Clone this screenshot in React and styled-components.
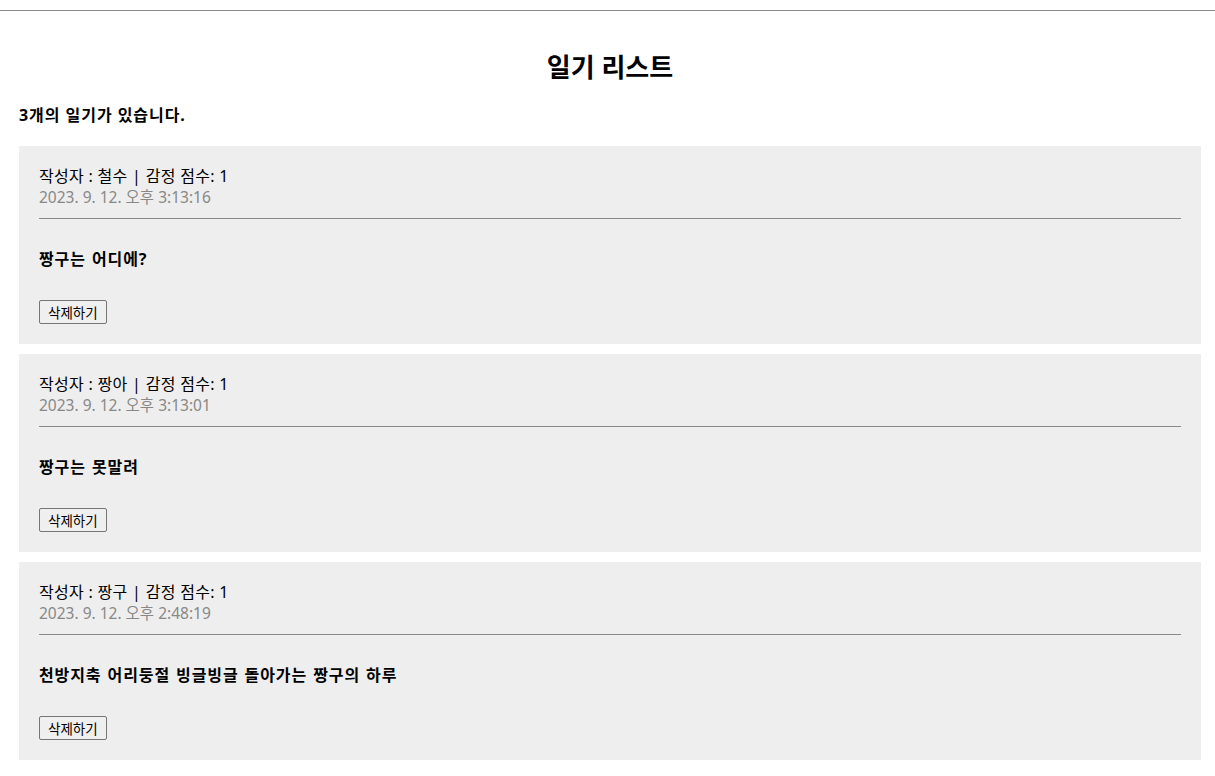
import styled, { createGlobalStyle } from "styled-components";

const GlobalStyle = createGlobalStyle`
  html, body {
    margin: 0;
    padding: 0;
    background: #ffffff;
  }
  body {
    font-family: "Noto Sans", "Noto Sans CJK KR", sans-serif;
    font-size: 16px;
    color: #000;
  }
`;

const TopRule = styled.hr`
  margin: 10px 0 0;
  border: none;
  border-top: 1px solid #8a8a8a;
  height: 0;
`;

const ListWrap = styled.div`
  padding: 0 14px 0 19px;
`;

const Title = styled.h2`
  margin: 40px 0 0;
  font-size: 26px;
  line-height: 32px;
  font-weight: 700;
  text-align: center;
`;

const Count = styled.h4`
  margin: 22px 0 0;
  font-size: 16px;
  line-height: 21px;
  font-weight: 700;
  letter-spacing: 0.95px;
`;

const Items = styled.div`
  display: flex;
  flex-direction: column;
  gap: 10px;
  margin-top: 20px;
`;

const Item = styled.div`
  background: #eeeeee;
  padding: 20px;
`;

const Info = styled.div`
  line-height: 21px;
  font-size: 16px;
  letter-spacing: 0.3px;
`;

const DateText = styled.span`
  display: block;
  color: #888888;
  font-size: 15.5px;
  letter-spacing: 0;
`;

const Divider = styled.hr`
  margin: 10px 0 0;
  border: none;
  border-top: 1px solid #8a8a8a;
  height: 0;
`;

const Content = styled.div`
  margin: 30px 0;
  font-size: 16px;
  line-height: 21px;
  font-weight: 700;
  letter-spacing: 0.9px;
  word-spacing: 1px;
`;

const DeleteButton = styled.button`
  height: 24px;
  padding: 0 8px;
  font-family: "Noto Sans CJK KR", sans-serif;
  font-size: 13.5px;
  color: #000;
  background: #efefef;
  border: 1px solid #767676;
  border-radius: 2px;
  cursor: pointer;
`;

const diaries = [
  { id: 3, author: "철수", emotion: 1, date: "2023. 9. 12. 오후 3:13:16", content: "짱구는 어디에?" },
  { id: 2, author: "짱아", emotion: 1, date: "2023. 9. 12. 오후 3:13:01", content: "짱구는 못말려" },
  { id: 1, author: "짱구", emotion: 1, date: "2023. 9. 12. 오후 2:48:19", content: "천방지축 어리둥절 빙글빙글 돌아가는 짱구의 하루" },
];

const App = () => {
  return (
    <>
      <GlobalStyle />
      <TopRule />
      <ListWrap>
        <Title>일기 리스트</Title>
        <Count>{diaries.length}개의 일기가 있습니다.</Count>
        <Items>
          {diaries.map((d) => (
            <Item key={d.id}>
              <Info>
                <span>
                  작성자 : {d.author} | 감정 점수: {d.emotion}
                </span>
                <DateText>{d.date}</DateText>
              </Info>
              <Divider />
              <Content>{d.content}</Content>
              <DeleteButton>삭제하기</DeleteButton>
            </Item>
          ))}
        </Items>
      </ListWrap>
    </>
  );
};

export default App;
